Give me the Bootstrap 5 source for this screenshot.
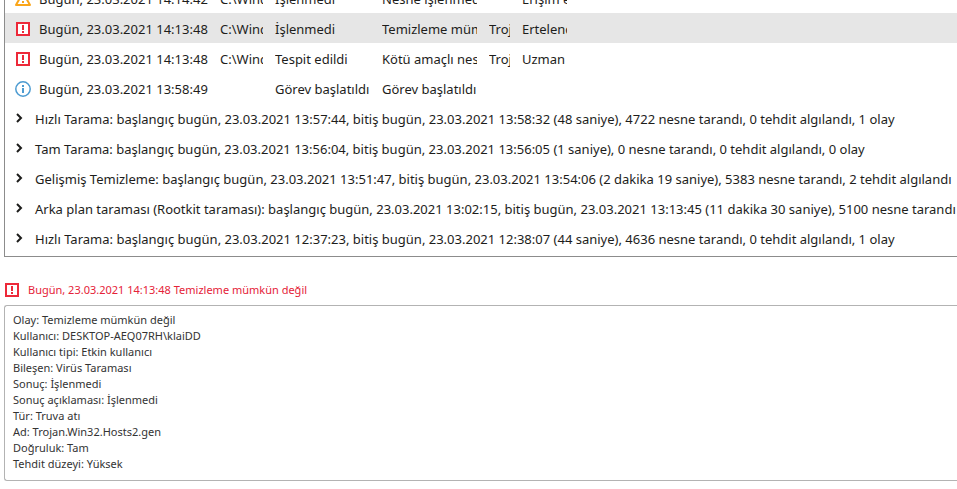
<!DOCTYPE html>
<html lang="tr">
<head>
<meta charset="utf-8">
<meta name="viewport" content="width=device-width, initial-scale=1">
<title>Rapor</title>
<link href="https://cdn.jsdelivr.net/npm/bootstrap@5.3.0/dist/css/bootstrap.min.css" rel="stylesheet">
<style>
body { font-family: "Noto Sans", sans-serif; font-size: 13px; line-height: 20px; color: #1d1d1b; background: #fff; }
.report { padding-left: 4px; }
/* the log is scrolled so that its first row is partly out of view */
.log { margin-top: -17px; padding-bottom: 3px; border-left: 1px solid #8c8c8c; border-bottom: 1px solid #8c8c8c; }
.log table { table-layout: fixed; color: inherit; }
.log td { height: 30px; padding: 2px 0 0; white-space: nowrap; vertical-align: middle; }
.log .clip { display: block; overflow: hidden; margin-right: 12px; }
.c-icon { width: 34px; } .c-date { width: 181px; } .c-file { width: 55px; }
.c-result { width: 107px; } .c-name { width: 33px; } .c-reason { width: 57px; }
.log .status { padding-left: 10px; }
.log svg, .caption svg { display: block; }
.selected { background: #e6e6e6; }
.group-toggle { gap: 12px; padding: 0 0 0 10px; border: 0; background: none; color: inherit; width: 100%; overflow: hidden; }
.group-toggle svg { flex: none; margin-bottom: 2px; }
.caption { font-size: 11px; line-height: 16px; color: #e52238; gap: 8px; margin: 25px 0 7px; }
.details { font-size: 11px; line-height: 16px; padding: 6px 8px 8px; border: 1px solid #b3b3b3; border-right: 0; border-radius: 3px 0 0 3px; color: #333; }
</style>
<script src="https://cdn.jsdelivr.net/npm/bootstrap@5.3.0/dist/js/bootstrap.bundle.min.js"></script>
</head>
<body class="overflow-hidden">
<svg class="d-none" aria-hidden="true">
  <symbol id="i-alert" viewBox="0 0 16 16"><path d="M2 2h12v12H2z" fill="#fff" stroke="#ed2939" stroke-width="2"/><path d="M7 4h2v5H7zM7 10h2v2H7z" fill="#ed2939"/></symbol>
  <symbol id="i-warn" viewBox="0 0 16 16"><path d="M8 1.5 15 14H1z" fill="#fff" stroke="#faa61a" stroke-width="2" stroke-linejoin="round"/><path d="M7 5h2v4H7zM7 10h2v2H7z" fill="#faa61a"/></symbol>
  <symbol id="i-info" viewBox="0 0 16 16"><circle cx="8" cy="8" r="7.2" fill="#fff" stroke="#4c9bd1" stroke-width="1.5"/><path d="M7 4h2v2H7zM7 7h2v5H7z" fill="#4c9bd1"/></symbol>
  <symbol id="i-chevron" viewBox="0 0 8 10"><path d="m2 1 4 4-4 4" fill="none" stroke="#1d1d1b" stroke-width="2"/></symbol>
</svg>
<main class="report">
  <section class="log">
    <table class="w-100">
      <colgroup><col class="c-icon"><col class="c-date"><col class="c-file"><col class="c-result"><col class="c-result"><col class="c-name"><col class="c-reason"><col></colgroup>
      <tbody>
        <tr><td class="status"><svg width="16" height="16"><use href="#i-warn"/></svg></td><td>Bugün, 23.03.2021 14:14:42</td><td><span class="clip">C:\Wind</span></td><td><span class="clip">İşlenmedi</span></td><td><span class="clip">Nesne işlenmedi</span></td><td></td><td><span class="clip">Erişim e</span></td><td></td></tr>
        <tr class="selected"><td class="status"><svg width="16" height="16"><use href="#i-alert"/></svg></td><td>Bugün, 23.03.2021 14:13:48</td><td><span class="clip">C:\Wind</span></td><td><span class="clip">İşlenmedi</span></td><td><span class="clip">Temizleme müm</span></td><td><span class="clip">Troj</span></td><td><span class="clip">Ertelend</span></td><td></td></tr>
        <tr><td class="status"><svg width="16" height="16"><use href="#i-alert"/></svg></td><td>Bugün, 23.03.2021 14:13:48</td><td><span class="clip">C:\Wind</span></td><td><span class="clip">Tespit edildi</span></td><td><span class="clip">Kötü amaçlı nes</span></td><td><span class="clip">Troj</span></td><td><span class="clip">Uzman</span></td><td></td></tr>
        <tr><td class="status"><svg width="16" height="16"><use href="#i-info"/></svg></td><td>Bugün, 23.03.2021 13:58:49</td><td></td><td><span class="clip">Görev başlatıldı</span></td><td><span class="clip">Görev başlatıldı</span></td><td></td><td></td><td></td></tr>
        <tr><td colspan="8"><button type="button" class="group-toggle d-flex align-items-center"><svg width="8" height="10"><use href="#i-chevron"/></svg><span>Hızlı Tarama: başlangıç bugün, 23.03.2021 13:57:44, bitiş bugün, 23.03.2021 13:58:32 (48 saniye), 4722 nesne tarandı, 0 tehdit algılandı, 1 olay</span></button></td></tr>
        <tr><td colspan="8"><button type="button" class="group-toggle d-flex align-items-center"><svg width="8" height="10"><use href="#i-chevron"/></svg><span>Tam Tarama: başlangıç bugün, 23.03.2021 13:56:04, bitiş bugün, 23.03.2021 13:56:05 (1 saniye), 0 nesne tarandı, 0 tehdit algılandı, 0 olay</span></button></td></tr>
        <tr><td colspan="8"><button type="button" class="group-toggle d-flex align-items-center"><svg width="8" height="10"><use href="#i-chevron"/></svg><span>Gelişmiş Temizleme: başlangıç bugün, 23.03.2021 13:51:47, bitiş bugün, 23.03.2021 13:54:06 (2 dakika 19 saniye), 5383 nesne tarandı, 2 tehdit algılandı</span></button></td></tr>
        <tr><td colspan="8"><button type="button" class="group-toggle d-flex align-items-center"><svg width="8" height="10"><use href="#i-chevron"/></svg><span>Arka plan taraması (Rootkit taraması): başlangıç bugün, 23.03.2021 13:02:15, bitiş bugün, 23.03.2021 13:13:45 (11 dakika 30 saniye), 5100 nesne tarandı</span></button></td></tr>
        <tr><td colspan="8"><button type="button" class="group-toggle d-flex align-items-center"><svg width="8" height="10"><use href="#i-chevron"/></svg><span>Hızlı Tarama: başlangıç bugün, 23.03.2021 12:37:23, bitiş bugün, 23.03.2021 12:38:07 (44 saniye), 4636 nesne tarandı, 0 tehdit algılandı, 1 olay</span></button></td></tr>
      </tbody>
    </table>
  </section>
  <section>
    <h2 class="caption d-flex align-items-center fw-normal"><svg width="16" height="16"><use href="#i-alert"/></svg>Bugün, 23.03.2021 14:13:48 Temizleme mümkün değil</h2>
    <div class="details">
      <div>Olay: Temizleme mümkün değil</div>
      <div>Kullanıcı: DESKTOP-AEQ07RH\klaiDD</div>
      <div>Kullanıcı tipi: Etkin kullanıcı</div>
      <div>Bileşen: Virüs Taraması</div>
      <div>Sonuç: İşlenmedi</div>
      <div>Sonuç açıklaması: İşlenmedi</div>
      <div>Tür: Truva atı</div>
      <div>Ad: Trojan.Win32.Hosts2.gen</div>
      <div>Doğruluk: Tam</div>
      <div>Tehdit düzeyi: Yüksek</div>
    </div>
  </section>
</main>
</body>
</html>
